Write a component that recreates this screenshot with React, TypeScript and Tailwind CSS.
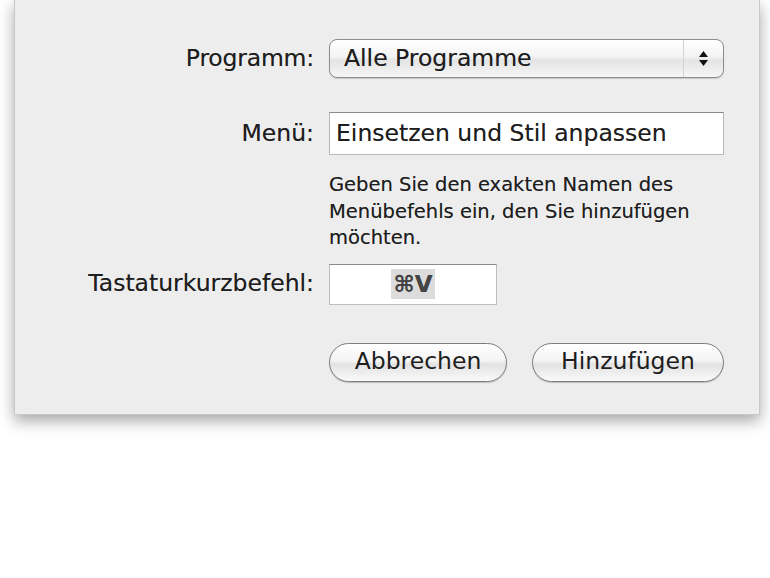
import React from "react";

const font = { fontFamily: '"DejaVu Sans", "Liberation Sans", sans-serif' };

export default function App() {
  return (
    <div className="w-[770px] h-[578px] bg-white overflow-hidden" style={font}>
      <div className="ml-[14px] w-[746px] h-[415px] bg-[#ededed] border-x border-b border-[#c8c8c8] shadow-[0_6px_14px_rgba(0,0,0,0.35)] text-[#1e1e1e] [text-shadow:0_0_0.6px_rgba(0,0,0,0.45)]">
        <div className="grid grid-cols-[299px_1fr] gap-x-[15px] items-center pt-[39px]">
          {/* Programm */}
          <div className="text-right text-[23.5px] tracking-[-0.2px]">Programm:</div>
          <div className="w-[395px] h-[39px] rounded-[8px] border border-[#8c8c8c] bg-[linear-gradient(#ffffff,#f3f3f3_45%,#e4e4e4_55%,#f6f6f6)] flex items-center shadow-[0_1px_1px_rgba(0,0,0,0.15)]">
            <div className="flex-1 pl-[14px] text-[23.5px] leading-none">Alle Programme</div>
            <div className="w-[40px] h-full border-l border-[#d4d4d4] flex flex-col items-center justify-center gap-[3px]">
              <svg width="9" height="6" viewBox="0 0 9 6"><path d="M4.5 0 L9 6 L0 6 Z" fill="#111" /></svg>
              <svg width="9" height="6" viewBox="0 0 9 6"><path d="M0 0 L9 0 L4.5 6 Z" fill="#111" /></svg>
            </div>
          </div>

          {/* Menü */}
          <div className="text-right text-[23.5px] mt-[34px]">Menü:</div>
          <div className="mt-[34px] w-[395px] h-[43px] bg-white border border-[#b8b8b8] border-t-[#8a8a8a] flex items-center pl-[6px] text-[23.5px] leading-none">
            Einsetzen und Stil anpassen
          </div>

          {/* help */}
          <div />
          <div className="mt-[17px] text-[19.5px] leading-[26.5px] w-[395px]">
            Geben Sie den exakten Namen des Menübefehls ein, den Sie hinzufügen möchten.
          </div>

          {/* Shortcut */}
          <div className="text-right text-[23.5px] mt-[12px]">Tastaturkurzbefehl:</div>
          <div className="mt-[12px] w-[168px] h-[41px] bg-white border border-[#bdbdbd] border-t-[#8a8a8a] flex items-center justify-center">
            <span className="bg-[#dcdcdc] px-[2px] text-[23px] leading-[30px] font-bold text-[#444]">⌘V</span>
          </div>

          {/* Buttons */}
          <div />
          <div className="mt-[38px] flex gap-[25px]">
            <button className="w-[178px] h-[39px] rounded-full border border-[#7d7d7d] bg-[linear-gradient(#ffffff,#f4f4f4_45%,#e2e2e2_55%,#fafafa)] text-[23.5px] leading-none text-[#1e1e1e] shadow-[0_1px_1px_rgba(0,0,0,0.2)]">
              Abbrechen
            </button>
            <button className="w-[192px] h-[39px] rounded-full border border-[#7d7d7d] bg-[linear-gradient(#ffffff,#f4f4f4_45%,#e2e2e2_55%,#fafafa)] text-[23.5px] leading-none text-[#1e1e1e] shadow-[0_1px_1px_rgba(0,0,0,0.2)]">
              Hinzufügen
            </button>
          </div>
        </div>
      </div>
    </div>
  );
}
